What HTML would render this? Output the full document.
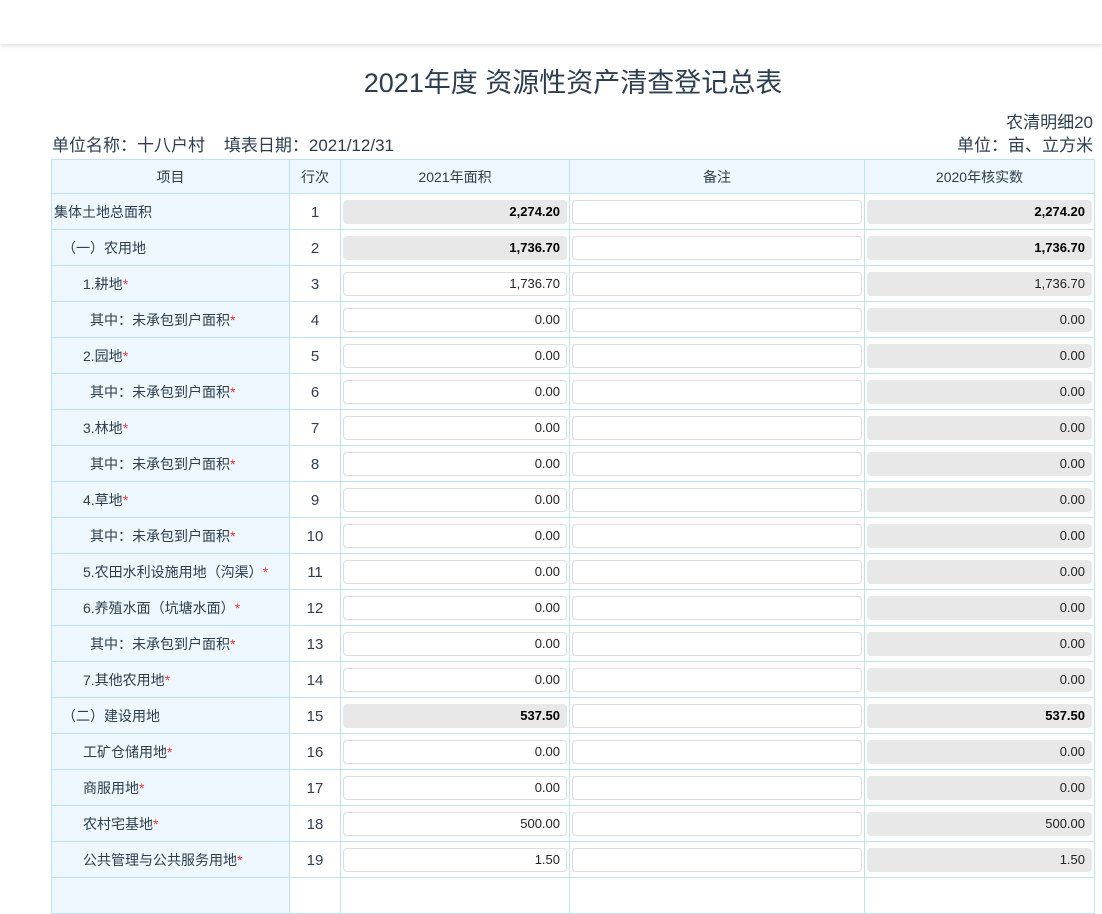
<!DOCTYPE html>
<html><head><meta charset="utf-8"><style>
body{margin:0;background:#fff;font-family:"Liberation Sans","Noto Sans CJK SC",sans-serif;color:#2c3e50;width:1102px;height:844px;overflow:hidden;position:relative}
.top{position:absolute;left:0;top:0;width:1102px;height:44px;background:#fff;box-shadow:0 2px 4px rgba(0,0,0,.12)}
.title{position:absolute;top:61px;left:0;width:1146px;text-align:center;font-size:27px;color:#2c3e50}
.r1{position:absolute;right:9px;top:108px;font-size:17px}
.r2{position:absolute;right:9px;top:131px;font-size:17px}
.l2{position:absolute;left:52px;top:131px;font-size:17px}
table{position:absolute;left:51px;top:159px;border-collapse:collapse;table-layout:fixed;width:1043px}
td,th{border:1px solid #bfe3ee;height:33px;padding:0;font-size:14px;font-weight:normal}
th{background:#eef7fd}
td.i{background:#eef7fd;white-space:nowrap}
td.n{text-align:center;font-size:15px;padding-top:2px}
.b{height:22px;margin:0 2px;border:1px solid #ddd;border-radius:4px;background:#fff;text-align:right;padding-right:6px;line-height:22px;font-size:13px;color:#222}
.g{background:#e8e8e8;border-color:#e8e8e8}
.bold{font-weight:bold;color:#000}
.s{color:#e33}
</style></head><body>
<div class="top"></div>
<div class="title">2021年度 资源性资产清查登记总表</div>
<div class="r1">农清明细20</div>
<div class="r2">单位：亩、立方米</div>
<div class="l2">单位名称：十八户村&nbsp;&nbsp;&nbsp;&nbsp;填表日期：2021/12/31</div>
<table>
<colgroup><col style="width:238px"><col style="width:51px"><col style="width:229px"><col style="width:295px"><col style="width:230px"></colgroup>
<tr><th>项目</th><th>行次</th><th>2021年面积</th><th>备注</th><th>2020年核实数</th></tr>
<tr><td class="i" style="padding-left:2px">集体土地总面积</td><td class="n">1</td><td><div class="b g bold">2,274.20</div></td><td><div class="b"></div></td><td><div class="b g bold">2,274.20</div></td></tr>
<tr><td class="i" style="padding-left:10px">（一）农用地</td><td class="n">2</td><td><div class="b g bold">1,736.70</div></td><td><div class="b"></div></td><td><div class="b g bold">1,736.70</div></td></tr>
<tr><td class="i" style="padding-left:31px">1.耕地<span class="s">*</span></td><td class="n">3</td><td><div class="b">1,736.70</div></td><td><div class="b"></div></td><td><div class="b g">1,736.70</div></td></tr>
<tr><td class="i" style="padding-left:38px">其中：未承包到户面积<span class="s">*</span></td><td class="n">4</td><td><div class="b">0.00</div></td><td><div class="b"></div></td><td><div class="b g">0.00</div></td></tr>
<tr><td class="i" style="padding-left:31px">2.园地<span class="s">*</span></td><td class="n">5</td><td><div class="b">0.00</div></td><td><div class="b"></div></td><td><div class="b g">0.00</div></td></tr>
<tr><td class="i" style="padding-left:38px">其中：未承包到户面积<span class="s">*</span></td><td class="n">6</td><td><div class="b">0.00</div></td><td><div class="b"></div></td><td><div class="b g">0.00</div></td></tr>
<tr><td class="i" style="padding-left:31px">3.林地<span class="s">*</span></td><td class="n">7</td><td><div class="b">0.00</div></td><td><div class="b"></div></td><td><div class="b g">0.00</div></td></tr>
<tr><td class="i" style="padding-left:38px">其中：未承包到户面积<span class="s">*</span></td><td class="n">8</td><td><div class="b">0.00</div></td><td><div class="b"></div></td><td><div class="b g">0.00</div></td></tr>
<tr><td class="i" style="padding-left:31px">4.草地<span class="s">*</span></td><td class="n">9</td><td><div class="b">0.00</div></td><td><div class="b"></div></td><td><div class="b g">0.00</div></td></tr>
<tr><td class="i" style="padding-left:38px">其中：未承包到户面积<span class="s">*</span></td><td class="n">10</td><td><div class="b">0.00</div></td><td><div class="b"></div></td><td><div class="b g">0.00</div></td></tr>
<tr><td class="i" style="padding-left:31px">5.农田水利设施用地（沟渠）<span class="s">*</span></td><td class="n">11</td><td><div class="b">0.00</div></td><td><div class="b"></div></td><td><div class="b g">0.00</div></td></tr>
<tr><td class="i" style="padding-left:31px">6.养殖水面（坑塘水面）<span class="s">*</span></td><td class="n">12</td><td><div class="b">0.00</div></td><td><div class="b"></div></td><td><div class="b g">0.00</div></td></tr>
<tr><td class="i" style="padding-left:38px">其中：未承包到户面积<span class="s">*</span></td><td class="n">13</td><td><div class="b">0.00</div></td><td><div class="b"></div></td><td><div class="b g">0.00</div></td></tr>
<tr><td class="i" style="padding-left:31px">7.其他农用地<span class="s">*</span></td><td class="n">14</td><td><div class="b">0.00</div></td><td><div class="b"></div></td><td><div class="b g">0.00</div></td></tr>
<tr><td class="i" style="padding-left:10px">（二）建设用地</td><td class="n">15</td><td><div class="b g bold">537.50</div></td><td><div class="b"></div></td><td><div class="b g bold">537.50</div></td></tr>
<tr><td class="i" style="padding-left:31px">工矿仓储用地<span class="s">*</span></td><td class="n">16</td><td><div class="b">0.00</div></td><td><div class="b"></div></td><td><div class="b g">0.00</div></td></tr>
<tr><td class="i" style="padding-left:31px">商服用地<span class="s">*</span></td><td class="n">17</td><td><div class="b">0.00</div></td><td><div class="b"></div></td><td><div class="b g">0.00</div></td></tr>
<tr><td class="i" style="padding-left:31px">农村宅基地<span class="s">*</span></td><td class="n">18</td><td><div class="b">500.00</div></td><td><div class="b"></div></td><td><div class="b g">500.00</div></td></tr>
<tr><td class="i" style="padding-left:31px">公共管理与公共服务用地<span class="s">*</span></td><td class="n">19</td><td><div class="b">1.50</div></td><td><div class="b"></div></td><td><div class="b g">1.50</div></td></tr>
<tr><td class="i"></td><td class="n"></td><td></td><td></td><td></td></tr>
</table>
</body></html>
